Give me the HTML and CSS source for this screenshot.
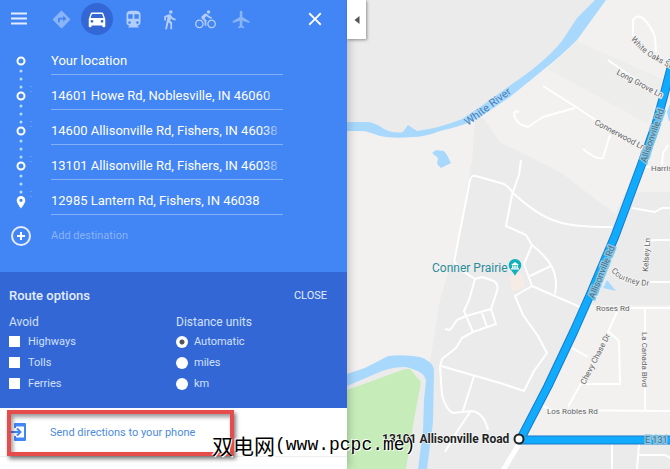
FILE: index.html
```html
<!DOCTYPE html>
<html lang="en">
  <head>
    <meta charset="UTF-8" />
    <meta name="viewport" content="width=device-width, initial-scale=1.0" />
    <title>Directions</title>
    <link rel="stylesheet" href="styles.css">
  </head>
  <body>
    <div class="app">
      <aside class="panel">
        <header class="toolbar">
          <button type="button" class="tool menu" aria-label="Menu">
            <svg width="24" height="24" viewBox="0 0 24 24"><path d="M4 6.500h16M4 11.500h16M4 16.500h16" stroke="currentColor" stroke-width="2" /></svg>
          </button>
          <nav class="modes">
            <button type="button" class="tool dim" aria-label="Best travel modes">
              <svg width="21" height="21" viewBox="0 0 24 24"><path d="M21.71 11.29l-9-9c-.39-.39-1.02-.39-1.41 0l-9 9c-.39.39-.39 1.02 0 1.41l9 9c.39.39 1.02.39 1.41 0l9-9c.39-.38.39-1.01 0-1.41zM14 14.5V12h-4v3H8v-4c0-.55.45-1 1-1h5V7.5l3.5 3.5-3.5 3.5z" /></svg>
            </button>
            <button type="button" class="tool active" aria-label="Driving">
              <svg width="22" height="22" viewBox="0 0 24 24"><path d="M18.92 6.01C18.72 5.42 18.16 5 17.5 5h-11c-.66 0-1.21.42-1.42 1.01L3 12v8c0 .55.45 1 1 1h1c.55 0 1-.45 1-1v-1h12v1c0 .55.45 1 1 1h1c.55 0 1-.45 1-1v-8l-2.08-5.99zM6.5 16c-.83 0-1.5-.67-1.5-1.5S5.67 13 6.5 13s1.5.67 1.5 1.5S7.33 16 6.5 16zm11 0c-.83 0-1.5-.67-1.5-1.5s.67-1.5 1.5-1.5 1.5.67 1.5 1.5-.67 1.5-1.5 1.5zM5 11l1.5-4.5h11L19 11H5z" /></svg>
            </button>
            <button type="button" class="tool" aria-label="Transit">
              <svg width="21" height="21" viewBox="0 0 24 24"><path d="M12 2c-4.42 0-8 .5-8 4v9.5C4 17.43 5.57 19 7.5 19L6 20.5v.5h12v-.5L16.5 19c1.93 0 3.5-1.57 3.5-3.5V6c0-3.5-3.58-4-8-4zM7.5 17c-.83 0-1.5-.67-1.5-1.5S6.67 14 7.5 14s1.5.67 1.5 1.5S8.33 17 7.5 17zm3.5-6H6V6h5v5zm5.5 6c-.83 0-1.5-.67-1.5-1.5s.67-1.5 1.5-1.5 1.5.67 1.5 1.5-.67 1.5-1.5 1.5zm1.5-6h-5V6h5v5z" /></svg>
            </button>
            <button type="button" class="tool" aria-label="Walking">
              <svg width="21" height="21" viewBox="0 0 24 24"><path d="M13.5 5.5c1.1 0 2-.9 2-2s-.9-2-2-2-2 .9-2 2 .9 2 2 2zM9.8 8.9L7 23h2.1l1.8-8 2.1 2v6h2v-7.5l-2.1-2 .6-3C14.8 12 16.8 13 19 13v-2c-1.9 0-3.5-1-4.3-2.4l-1-1.6c-.4-.6-1-1-1.7-1-.3 0-.5.1-.8.1L6 8.3V13h2V9.6l1.8-.7" /></svg>
            </button>
            <button type="button" class="tool" aria-label="Cycling">
              <svg width="21" height="21" viewBox="0 0 24 24"><path d="M15.5 5.5c1.1 0 2-.9 2-2s-.9-2-2-2-2 .9-2 2 .9 2 2 2zM5 12c-2.8 0-5 2.2-5 5s2.2 5 5 5 5-2.2 5-5-2.2-5-5-5zm0 8.5c-1.9 0-3.5-1.6-3.5-3.5s1.6-3.5 3.5-3.5 3.5 1.6 3.5 3.5-1.6 3.5-3.5 3.5zm5.8-10l2.4-2.4.8.8c1.3 1.3 3 2.1 5.1 2.1V9c-1.5 0-2.7-.6-3.6-1.5l-1.9-1.9c-.5-.4-1-.6-1.6-.6s-1.1.2-1.4.6L7.8 8.4c-.4.4-.6.9-.6 1.4 0 .6.2 1.1.6 1.4L11 14v5h2v-6.2l-2.2-2.3zM19 12c-2.8 0-5 2.2-5 5s2.2 5 5 5 5-2.2 5-5-2.2-5-5-5zm0 8.5c-1.9 0-3.5-1.6-3.5-3.5s1.6-3.5 3.5-3.5 3.5 1.6 3.5 3.5-1.6 3.5-3.5 3.5z" /></svg>
            </button>
            <button type="button" class="tool dim" aria-label="Flights">
              <svg width="21" height="21" viewBox="0 0 24 24"><path d="M21 16v-2l-8-5V3.5c0-.83-.67-1.5-1.5-1.5S10 2.67 10 3.5V9l-8 5v2l8-2.5V19l-2 1.5V22l3.5-1 3.5 1v-1.5L13 19v-5.5l8 2.5z" /></svg>
            </button>
          </nav>
          <button type="button" class="tool close-panel" aria-label="Close directions">
            <svg width="22" height="22" viewBox="0 0 24 24"><path d="M19 6.41L17.59 5 12 10.59 6.41 5 5 6.41 10.59 12 5 17.59 6.41 19 12 13.41 17.59 19 19 17.59 13.41 12z" /></svg>
          </button>
        </header>

        <form class="waypoints">
          <div class="stop">
            <svg class="marker" width="42" height="35" viewBox="0 0 42 35">
              <circle class="ring" cx="21" cy="18" r="3.500" />
              <path class="dots" d="M21 28v17" />
            </svg>
            <input type="text" aria-label="Starting point" value="Your location" />
          </div>
          <div class="stop">
            <svg class="marker" width="42" height="35" viewBox="0 0 42 35">
              <circle class="ring" cx="21" cy="18" r="3.500" />
              <path class="dots" d="M21 28v17" />
              <path class="handle" d="M31 8v1M31 13v1" />
            </svg>
            <input type="text" aria-label="Destination 1" value="14601 Howe Rd, Noblesville, IN 46060" />
          </div>
          <div class="stop">
            <svg class="marker" width="42" height="35" viewBox="0 0 42 35">
              <circle class="ring" cx="21" cy="18" r="3.500" />
              <path class="dots" d="M21 28v17" />
              <path class="handle" d="M31 8v1M31 13v1" />
            </svg>
            <input type="text" aria-label="Destination 2" value="14600 Allisonville Rd, Fishers, IN 46038" />
          </div>
          <div class="stop">
            <svg class="marker" width="42" height="35" viewBox="0 0 42 35">
              <circle class="ring" cx="21" cy="18" r="3.500" />
              <path class="dots" d="M21 28v17" />
              <path class="handle" d="M31 8v1M31 13v1" />
            </svg>
            <input type="text" aria-label="Destination 3" value="13101 Allisonville Rd, Fishers, IN 46038" />
          </div>
          <div class="stop">
            <svg class="marker" width="42" height="35" viewBox="0 0 42 35">
              <path d="M21 13c-2.400 0-4.300 1.900-4.300 4.300 0 3.200 4.300 8.200 4.300 8.200s4.300-5 4.300-8.200c0-2.400-1.900-4.300-4.300-4.300zm0 5.900a1.600 1.600 0 1 1 0-3.200 1.600 1.600 0 0 1 0 3.200z" fill="#fff" />
              <path class="handle" d="M31 8v1M31 13v1" />
            </svg>
            <input type="text" aria-label="Destination 4" value="12985 Lantern Rd, Fishers, IN 46038" />
          </div>
          <button type="button" class="add-stop">
            <svg class="marker" width="42" height="35" viewBox="0 0 42 35">
              <circle cx="21" cy="18" r="9" fill="none" stroke="#e3edff" stroke-width="2" />
              <path d="M21 14v8M17 18h8" stroke="#fff" stroke-width="2" />
            </svg>
            <span>Add destination</span>
          </button>
        </form>

        <section class="options">
          <div class="options-head">
            <h2>Route options</h2>
            <button type="button" class="close-options">CLOSE</button>
          </div>
          <div class="options-body">
            <fieldset>
              <legend>Avoid</legend>
              <label><input type="checkbox" /> Highways</label>
              <label><input type="checkbox" /> Tolls</label>
              <label><input type="checkbox" /> Ferries</label>
            </fieldset>
            <fieldset>
              <legend>Distance units</legend>
              <label><input type="radio" name="units" checked /> Automatic</label>
              <label><input type="radio" name="units" /> miles</label>
              <label><input type="radio" name="units" /> km</label>
            </fieldset>
          </div>
        </section>

        <div class="send">
          <a href="#">
            <svg width="16" height="20" viewBox="0 0 16 20" fill="none" stroke="#4285f4" stroke-width="2">
              <path d="M4 6V2h10v16H4v-4" stroke-linejoin="round" />
              <path d="M4 3h10M4 17h10" stroke-width="3" />
              <path d="M0 10h9M6 6.500l3.500 3.500L6 13.500" />
            </svg>
            Send directions to your phone
          </a>
          <div class="highlight"></div>
        </div>
      </aside>

      <main class="map">
        <svg class="map-canvas" viewBox="347 0 323 469" preserveAspectRatio="xMinYMin slice">
          <defs>
            <path id="white-oaks" d="M631 39Q640 54 670 68" />
            <path id="courtney" d="M611 271Q623 286 655 286" />
          </defs>

          <!-- land -->
          <g fill="#f2f1ef">
            <path d="M347 130L395 136L440 130L475 120L472 160L458 240L440 300L430 362L395 356L347 374z" />
            <path d="M480 114L545 67L580 32L602 0H670V192H625L615 214L560 172L500 142z" />
            <path d="M587 305H670V435H524L548 388z" />
          </g>
          <path d="M577 41L664 80L648 124L548 69z" fill="#ededec" />

          <!-- water and park -->
          <path d="M347 390L405 369H410L421 382L414 420L406 469H347z" fill="#c6edb9" />
          <g fill="#a8d9fd">
            <path d="M347 122H368Q376 123 384 129Q394 134 403 132L408 125L417 131Q440 128 462 119L480 107L512 84Q545 62 562 41L577 18L595 0H606L577 40Q560 57 543 70L510 97L480 117Q467 125 440 131Q425 137 412 137Q393 139 380 136L365 131H347z" />
            <path d="M432 153L436 150L444 151L447 155L451 163L441 168L437 164L438 158z" />
            <path d="M347 374L365 368L388 356Q405 354 420 357Q434 362 434 371L433 422L427 469H418L423 430L424 400L426 381Q425 371 405 367Q393 367 382 371L347 386z" />
            <path d="M607 280L616 291L603 288z" />
            <path d="M670 104L667 112L669 121H670z" />
          </g>

          <!-- streets -->
          <g class="streets">
            <path d="M454 262L470 180Q471 175 476 176L504 184Q509 187 513 193Q540 218 562 223Q578 227 612 227" />
            <path d="M521 160L519 175L512 195L506 226L526 235L532 245Q546 256 552 267Q558 280 555 294" />
            <path d="M532 245L524 264L532 286L580 307M530 276L551 266" />
            <path d="M532 286L515 296L523 315L538 336L547 353L534 371L524 391L500 383L441 366" />
            <path d="M454 262L464 272L475 279L482 277L494 281Q499 285 497 291L491 309L496 324L473 332L462 338L456 348L442 359L440 367L442 395Q446 410 453 413L472 411Q484 413 488 430" />
            <path d="M475 279L469 300L464 311L473 332M491 309L466 316L457 320L450 330L445 329M482 313L487 327" />
            <path d="M474 376L463 411M470 412L458 430L445 452" />
            <path d="M633 36L633 20Q637 14 643 18Q654 30 655 38L656 52M608 60L656 94M543 86L576 107L600 123L640 147" />
            <path d="M575 108L543 117L528 127Q515 124 514 114Q515 110 519 112M610 135L603 158Q598 161 583 149" />
            <path d="M632 208L655 212L662 208H670M662 165L663 153L668 145M640 167H652" />
            <path d="M627 308H670M645 308V411M541 405L551 410L670 411" />
            <path d="M617 312L608 332L580 385L568 407M609 332L619 341L620 384H580M572 348L588 357" />
            <path d="M645 282H670M645 272L645 247Q648 239 657 240H670M612 444V469M639 444L637 469M639 455H665L670 458" />
            <path d="M519 444L502 472" stroke-width="5" />
          </g>

          <!-- route -->
          <g class="route">
            <path d="M670 440H520L548 386L574 331L590 295L615 236L641 166L656 124L664 95L673 60" stroke="#1b78c8" stroke-width="9" />
            <path d="M670 440H520L548 386L574 331L590 295L615 236L641 166L656 124L664 95L673 60" stroke="#11abfd" stroke-width="7" />
          </g>
          <circle cx="519" cy="439" r="4.500" fill="#fff" stroke="#222" stroke-width="2" />

          <!-- labels -->
          <g class="labels">
            <text><textPath href="#white-oaks">White Oaks St</textPath></text>
            <text transform="translate(616 74) rotate(28)">Long Grove Ln</text>
            <text transform="translate(594 124) rotate(28)">Connerwood Ln</text>
            <text transform="translate(648 272) rotate(-86)">Kelsey Ln</text>
            <text><textPath href="#courtney">Courtney Dr</textPath></text>
            <text x="596" y="311">Roses Rd</text>
            <text transform="translate(585 385) rotate(-63)">Chevy Chase Dr</text>
            <text transform="translate(642 332) rotate(90)">La Canada Blvd</text>
            <text x="547" y="414">Los Robles Rd</text>
            <text x="651" y="171">Harris</text>
          </g>
          <g class="route-labels">
            <text transform="translate(594 299) rotate(-68)">Allisonville Rd</text>
            <text transform="translate(646 163) rotate(-71)">Allisonville Rd</text>
            <text x="645" y="443">E 131</text>
          </g>
          <text class="river-label" transform="translate(468 126) rotate(-37)">White River</text>
          <text class="place-label" x="432" y="272">Conner Prairie</text>
          <text class="stop-label" x="382" y="443">13101 Allisonville Road</text>

          <!-- museum pin -->
          <path d="M509 276L522 273L525 287L512 291z" fill="#f6ece6" />
          <path d="M515 259a6.300 6.300 0 0 0-6.300 6.300c0 4 4.300 6 6.300 10.500 2-4.500 6.300-6.500 6.300-10.500A6.300 6.300 0 0 0 515 259z" fill="#12b0b8" />
          <path d="M511 265l4-3 4 3zM512 265.500h1.500v2.500H512zM514.200 265.500h1.500v2.500h-1.500zM516.500 265.500h1.500v2.500h-1.500zM511 268.200h8v1.300h-8z" fill="#fff" />
        </svg>
        <button type="button" class="collapse" aria-label="Collapse side panel">
          <svg width="6" height="8" viewBox="0 0 6 8"><path d="M5.500 0v8L0.500 4z" fill="#555" /></svg>
        </button>
      </main>

      <div class="watermark"><span>双电网</span>(www.pcpc.me)</div>
    </div>
  </body>
</html>
```
FILE: styles.css
```css
* {
  box-sizing: border-box;
}
body {
  margin: 0;
  font-family: Roboto, Arial, sans-serif;
  font-size: 12px;
  color: #fff;
}
button,
input {
  font-family: inherit;
  margin: 0;
}
button {
  padding: 0;
  border: 0;
  background: none;
  color: inherit;
  cursor: pointer;
}
.app {
  position: relative;
  display: flex;
  min-height: 100vh;
  overflow: hidden;
}

/* side panel */
.panel {
  position: relative;
  z-index: 1;
  flex: 0 0 347px;
  background-color: #fff;
  box-shadow: 0 0 10px rgba(0, 0, 0, 0.3);
}
.toolbar {
  display: flex;
  align-items: center;
  height: 38px;
  padding-right: 16px;
  background-color: #4285f4;
}
.modes {
  display: flex;
  gap: 4px;
}
.tool {
  display: flex;
  align-items: center;
  justify-content: center;
  width: 32px;
  height: 32px;
  border-radius: 50%;
  color: #b3cefb;
}
.tool svg {
  fill: currentColor;
}
.menu {
  margin: 0 10px 0 3px;
  color: #e3edff;
}
.dim {
  color: #8ab4f8;
}
.active {
  background-color: #3367d6;
  color: #fff;
}
.close-panel {
  margin-left: auto;
  color: #fff;
}
.waypoints {
  padding: 5px 0 19px;
  background-color: #4285f4;
}
.stop {
  position: relative;
  display: flex;
  height: 35px;
  padding-right: 64px;
}
.marker {
  flex: none;
  overflow: visible;
}
.stop input {
  flex: 1;
  min-width: 0;
  height: 32px;
  margin-left: 9px;
  padding: 4px 0 0;
  border: 0;
  border-bottom: 1px solid #84b0f8;
  background: none;
  color: #fff;
  font-size: 13px;
  outline: none;
}
/* fades out addresses that run past the field */
.stop::after {
  content: "";
  position: absolute;
  right: 64px;
  top: 4px;
  width: 20px;
  height: 26px;
  background: linear-gradient(to right, rgba(66, 133, 244, 0), #4285f4);
}
.ring {
  fill: none;
  stroke: #fff;
  stroke-width: 2;
}
.dots {
  stroke: #b3e0ff;
  stroke-width: 3;
  stroke-linecap: round;
  stroke-dasharray: 0 8;
}
.handle {
  stroke: #8ab4f8;
  stroke-width: 1;
}
.add-stop {
  display: flex;
  align-items: center;
  height: 35px;
  color: #8ab4f8;
  font-size: 11px;
}
.add-stop span {
  margin-left: 9px;
}

/* route options */
.options {
  padding: 13px 20px 14px 9px;
  background-color: #3367d6;
}
.options-head {
  display: flex;
  align-items: center;
  justify-content: space-between;
  height: 20px;
}
.options h2 {
  margin: 0;
  font-size: 13px;
  font-weight: 500;
  color: #e3edff;
}
.close-options {
  font-size: 11px;
  color: #e3edff;
}
.options-body {
  display: grid;
  grid-template-columns: 1fr 1fr;
  padding-top: 8px;
}
.options fieldset {
  min-width: 0;
  margin: 0;
  padding: 0;
  border: 0;
  color: #d2e0fb;
}
.options fieldset + fieldset {
  padding-left: 8px;
}
.options legend {
  padding: 0;
  line-height: 18px;
}
.options label {
  display: flex;
  align-items: center;
  height: 21px;
  font-size: 11px;
}
.options input {
  appearance: none;
  width: 11px;
  height: 11px;
  margin-right: 8px;
  background-color: #fff;
}
.options input[type="radio"] {
  width: 12px;
  height: 12px;
  margin-right: 6px;
  border-radius: 50%;
}
.options input[type="radio"]:checked {
  background-image: radial-gradient(circle, #555 0 2px, #fff 3px);
}
.send {
  position: relative;
  border-bottom: 1px solid #eee;
}
.send a {
  display: flex;
  align-items: center;
  gap: 23px;
  height: 48px;
  padding-left: 11px;
  color: #4b8bdc;
  font-size: 11px;
  text-decoration: none;
}
.highlight {
  position: absolute;
  left: 7px;
  top: 2px;
  width: 227px;
  height: 46px;
  border: 4px solid #e64c4c;
  box-shadow: 2px 3px 4px rgba(0, 0, 0, 0.5), inset 2px 3px 4px rgba(0, 0, 0, 0.4);
  pointer-events: none;
}

/* map */
.map {
  position: relative;
  flex: 1;
  min-width: 0;
  background-color: #ebebeb;
}
.map-canvas {
  position: absolute;
  width: 100%;
  height: 100%;
}
.streets,
.route {
  fill: none;
  stroke: #fff;
  stroke-width: 2;
  stroke-linejoin: round;
}
.labels {
  font-size: 8px;
  fill: #666;
  stroke: #f4f4f4;
  stroke-width: 2;
  paint-order: stroke;
}
.route-labels {
  font-size: 9px;
  fill: #4b6c80;
  stroke: #86c5e6;
  stroke-width: 3;
  paint-order: stroke;
}
.river-label {
  font-size: 11px;
  fill: #4a7fb8;
}
.place-label {
  font-size: 12px;
  fill: #2a8c9b;
}
.stop-label {
  font-size: 12px;
  font-weight: 700;
  fill: #222;
  stroke: #fff;
  stroke-width: 1;
  paint-order: stroke;
}
.collapse {
  position: absolute;
  left: 0;
  top: 0;
  z-index: 2;
  display: flex;
  align-items: center;
  justify-content: center;
  width: 19px;
  height: 39px;
  background-color: #fff;
  box-shadow: 1px 1px 3px rgba(0, 0, 0, 0.4);
}
.watermark {
  position: absolute;
  z-index: 3;
  left: 212px;
  bottom: 10px;
  display: flex;
  align-items: center;
  font-family: "Liberation Mono", monospace;
  font-size: 18px;
  line-height: 28px;
  color: #000;
  text-shadow: 1px 1px 0 #fff, -1px -1px 0 #fff;
}
.watermark span {
  font-family: "Noto Sans CJK SC", sans-serif;
  font-size: 21px;
}
```
